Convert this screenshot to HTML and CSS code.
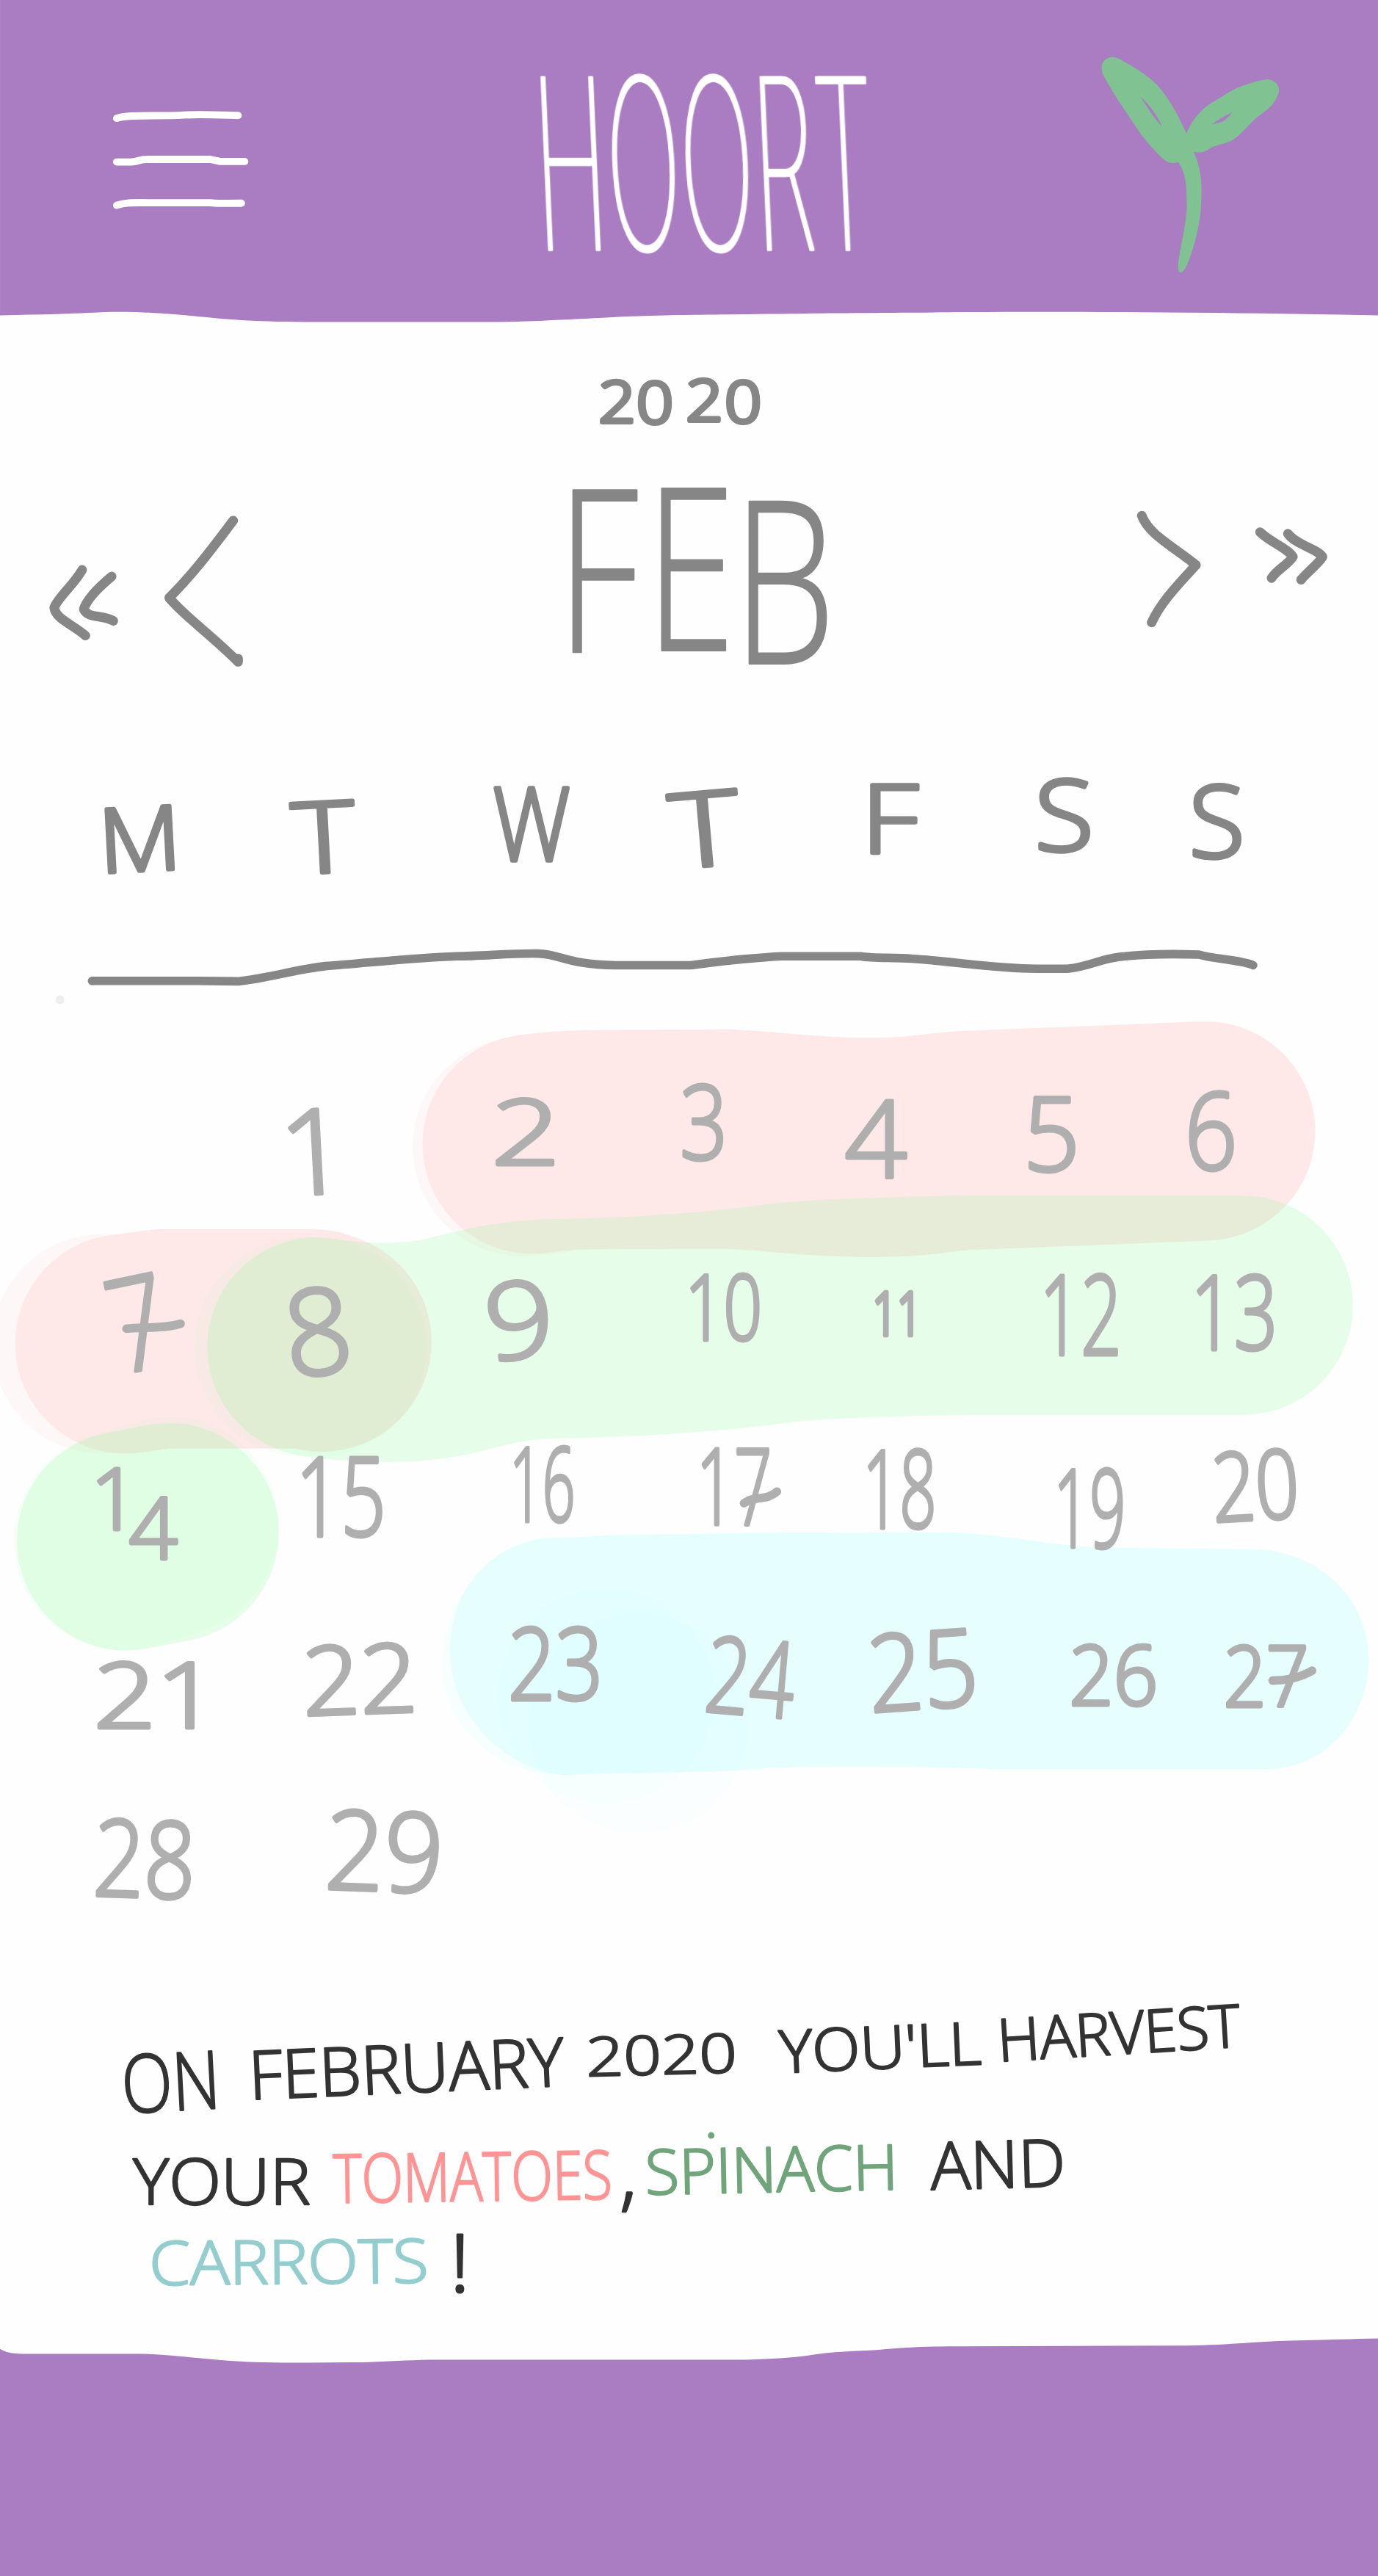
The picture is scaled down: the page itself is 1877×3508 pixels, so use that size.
FILE: index.html
```html
<!DOCTYPE html>
<html lang="en">
<head>
<meta charset="utf-8">
<title>Hoort</title>
<link rel="stylesheet" href="styles.css">
</head>
<body>
<div class="page">
  <header>
    <svg class="art" viewBox="0 0 839 200">
      <path class="purple" d="M0 0H839V192C760 190.500 680 189.500 588 190C540 190.500 510 190.500 481 191C440 191.500 410 191.500 385 192.500C350 194 325 196 300 196H214C180 196 155 196 130 193.500C105 191 85 189.500 64 190C45 191 25 191.500 0 192Z"/>
      <g class="menu">
        <path d="M71 72C78 69.500 95 71 112 70C122 69.500 134 70 145 70.300"/>
        <path d="M71 98.600H80C86 98 84 97 90 97H128L134 98.300H149"/>
        <path d="M71 125C77 123 82 123.400 90 123.400H128C135 124 142 123.800 147 123.700"/>
      </g>
      <g transform="translate(-4.400 0) skewX(2.500)">
        <text class="logo" x="325" y="152" font-size="144" textLength="207" lengthAdjust="spacingAndGlyphs">HOORT</text>
      </g>
      <g class="sprout" transform="translate(652.600 22.350) scale(.149)">
        <path fill-rule="evenodd" d="M122 130C120 100 142 83 166 83C190 84 215 103 240 117C290 148 333 175 365 217C410 275 442 335 468 396C490 345 520 305 565 274C610 248 655 215 690 203C730 190 765 176 803 174C832 178 850 200 846 225C842 245 825 275 805 292C775 317 755 328 733 352C705 380 680 413 645 428C615 440 590 442 568 454C545 470 525 478 498 470C520 520 531 570 530 630C529 680 527 730 518 770C508 825 492 880 475 922C464 952 452 965 440 963C430 955 435 915 441 885C452 825 470 740 470 690C469 640 468 600 461 572C456 550 448 530 435 512C410 521 390 515 372 498C340 468 305 428 280 395L190 260C165 220 140 180 125 150ZM280 245C310 290 330 325 370 368C345 315 320 280 280 245ZM570 360C600 335 630 322 656 308C640 330 625 343 610 349C595 354 582 354 570 360Z"/>
      </g>
    </svg>
  </header>

  <main>
    <svg class="art" viewBox="0 200 839 75">
      <text class="grey year" transform="scale(1.120 1)" x="325.500 346 373 394" y="257 257.500 256.500 257" font-size="35">2020</text>
    </svg>

    <nav class="month">
      <svg class="art arrows" viewBox="0 275 280 150">
        <path d="M50 347C45 356 35 364 33 370C34 377 44 380 52 387M68 351C62 356 53 364 51 371C54 377 62 374 69 378"/>
        <path d="M142 317C130 333 118 349 103 364C112 375 128 386 145 403V401"/>
      </svg>
      <svg class="art" viewBox="280 275 279 150">
        <text class="grey feb" transform="scale(.720 1)" x="471 546 620" y="397 396 404" font-size="138">FEB</text>
      </svg>
      <svg class="art arrows" viewBox="559 275 280 150">
        <path d="M695 314C699 325 713 332 728 344C718 355 707 366 701 379"/>
        <path d="M767 324C773 330 784 334 787 339C785 343 777 347 774 352M784 325C789 332 802 334 805 339C803 343 795 349 792 353"/>
      </svg>
    </nav>

    <div class="columns grey">
      <svg class="art" viewBox="0 425 143 135"><text x="60" y="530" font-size="54" textLength="50" lengthAdjust="spacingAndGlyphs" transform="rotate(-3 85 510)">M</text></svg>
      <svg class="art" viewBox="143 425 121 135"><text x="178" y="531" font-size="60" textLength="38" lengthAdjust="spacingAndGlyphs" transform="rotate(-3 197 510)">T</text></svg>
      <svg class="art" viewBox="264 425 111 135"><text x="300" y="524" font-size="62" textLength="47" lengthAdjust="spacingAndGlyphs">W</text></svg>
      <svg class="art" viewBox="375 425 112 135"><text x="408" y="527" font-size="63" textLength="42" lengthAdjust="spacingAndGlyphs" transform="rotate(-5 430 505)">T</text></svg>
      <svg class="art" viewBox="487 425 112 135"><text x="524" y="519" font-size="58" textLength="35" lengthAdjust="spacingAndGlyphs">F</text></svg>
      <svg class="art" viewBox="599 425 98 135"><text x="630" y="518" font-size="60" textLength="36" lengthAdjust="spacingAndGlyphs">S</text></svg>
      <svg class="art" viewBox="697 425 142 135"><text x="724" y="522" font-size="61" textLength="34" lengthAdjust="spacingAndGlyphs">S</text></svg>
    </div>

    <svg class="art rule" viewBox="0 560 839 60">
      <path d="M56 597H120L145 597.300C165 595 180 590 198 588C225 586 250 583 278 582C295 582 310 580 328 580.400C342 581 345 587 375 587.500H420C440 585 455 583 476 582H524C532 583.500 545 582.500 555 583.500C580 585 605 589.500 631 589.600H650C665 588 670 583 685 582C700 580.500 715 580.500 730 581C740 584 755 584 763 587.500"/>
      <circle cx="36.500" cy="608.500" r="2.700"/>
    </svg>

    <section class="weeks">
      <svg class="bands" viewBox="0 620 839 570">
        <g class="pink">
          <path class="faint" d="M318 698L330 697"/>
          <path d="M324 696.500C345 693 370 693.600 445 693.500C475 695 495 698.500 530 698.500C565 698.500 570 694.500 595 694L734 688.500"/>
          <path class="faint" d="M62 818H80"/>
          <path d="M76 818L99 815H191L196 817"/>
        </g>
        <g class="green">
          <path class="faint" d="M185 820H193"/>
          <path d="M193 820C225 825 255 824 275 819S310 810 332 809C400 808 440 804 470 800S560 795 590 794.600H757"/>
          <path class="faint" d="M75 938L103 929"/>
          <path d="M77 938L103 933"/>
        </g>
        <g class="cyan">
          <path class="faint" d="M269 1012C270 970 300 940 337 940V1080.500C300 1078 269 1050 269 1012Z"/>
          <path d="M274 1005C274 965 302 937 337 936C360 936 370 934 385 934C430 934 470 932.500 508 933C545 933 565 932.500 583 933C620 935 640 941 669 942L765 943C803 945 833 972 833.500 1011C832 1050 805 1077 770 1077H610C560 1075 510 1075 470 1076C430 1080 390 1078 343 1080.500C305 1076 274 1043 274 1005Z"/>
          <circle class="haze" cx="369" cy="1032" r="66"/>
          <circle class="haze" cx="389" cy="1049" r="67"/>
        </g>
      </svg>

      <div class="columns days">
        <svg class="art" viewBox="0 620 143 120"></svg>
        <svg class="art" viewBox="143 620 121 120"><text x="170" y="727" font-size="72" textLength="42" lengthAdjust="spacingAndGlyphs" transform="rotate(-3 188 700)">1</text></svg>
        <svg class="art" viewBox="264 620 111 120"><text x="299" y="709" font-size="55" textLength="42" lengthAdjust="spacingAndGlyphs">2</text></svg>
        <svg class="art" viewBox="375 620 112 120"><text x="414" y="706" font-size="63" textLength="29" lengthAdjust="spacingAndGlyphs">3</text></svg>
        <svg class="art" viewBox="487 620 112 120"><text x="514" y="717" font-size="65" textLength="38" lengthAdjust="spacingAndGlyphs">4</text></svg>
        <svg class="art" viewBox="599 620 98 120"><text x="623" y="713" font-size="63" textLength="34.500" lengthAdjust="spacingAndGlyphs">5</text></svg>
        <svg class="art" viewBox="697 620 142 120"><text x="721.500" y="712" font-size="65" textLength="32" lengthAdjust="spacingAndGlyphs">6</text></svg>

        <svg class="art" viewBox="0 740 143 120"><text x="66" y="834" font-size="79" textLength="36" lengthAdjust="spacingAndGlyphs" transform="rotate(-12 84 806)">7</text><path d="M77 809C88 808 100 809 110 806"/></svg>
        <svg class="art" viewBox="143 740 121 120"><text x="173" y="837" font-size="73" textLength="41" lengthAdjust="spacingAndGlyphs" transform="rotate(-6 193 811)">8</text></svg>
        <svg class="art" viewBox="264 740 111 120"><text x="295" y="827" font-size="65" textLength="42" lengthAdjust="spacingAndGlyphs" transform="rotate(-6 315 804)">9</text></svg>
        <svg class="art" viewBox="375 740 112 120"><text x="417" y="816" font-size="55" textLength="47" lengthAdjust="spacingAndGlyphs">10</text></svg>
        <svg class="art" viewBox="487 740 112 120"><text class="small" x="531" y="813" font-size="36" textLength="30" lengthAdjust="spacingAndGlyphs">11</text></svg>
        <svg class="art" viewBox="599 740 98 120"><text x="633" y="825" font-size="68" textLength="50" lengthAdjust="spacingAndGlyphs">12</text></svg>
        <svg class="art" viewBox="697 740 142 120"><text x="725" y="822" font-size="63" textLength="53" lengthAdjust="spacingAndGlyphs">13</text></svg>

        <svg class="art" viewBox="0 860 143 110"><text x="55 78.500" y="931 949" font-size="52">14</text></svg>
        <svg class="art" viewBox="143 860 121 110"><text x="180" y="935" font-size="67" textLength="55" lengthAdjust="spacingAndGlyphs">15</text></svg>
        <svg class="art" viewBox="264 860 111 110"><text x="310" y="926" font-size="63" textLength="40" lengthAdjust="spacingAndGlyphs">16</text></svg>
        <svg class="art" viewBox="375 860 112 110"><text x="424" y="928" font-size="64" textLength="46" lengthAdjust="spacingAndGlyphs">17</text><path d="M453 915C460 910 466 914 473 908"/></svg>
        <svg class="art" viewBox="487 860 112 110"><text x="525" y="930" font-size="66" textLength="45" lengthAdjust="spacingAndGlyphs">18</text></svg>
        <svg class="art" viewBox="599 860 98 110"><text x="641.500" y="942" font-size="66" textLength="44" lengthAdjust="spacingAndGlyphs">19</text></svg>
        <svg class="art" viewBox="697 860 142 110"><text x="738" y="925" font-size="58" textLength="53" lengthAdjust="spacingAndGlyphs" transform="rotate(-3 764 905)">20</text></svg>

        <svg class="art" viewBox="0 970 143 110"><text x="57" y="1052" font-size="55" textLength="76" lengthAdjust="spacingAndGlyphs">21</text></svg>
        <svg class="art" viewBox="143 970 121 110"><text x="184" y="1043" font-size="58" textLength="70" lengthAdjust="spacingAndGlyphs" transform="rotate(-2 218 1020)">22</text></svg>
        <svg class="art" viewBox="264 970 111 110"><text x="309" y="1035" font-size="61" textLength="58" lengthAdjust="spacingAndGlyphs">23</text></svg>
        <svg class="art" viewBox="375 970 112 110"><text x="430" y="1044" font-size="64" textLength="54" lengthAdjust="spacingAndGlyphs" transform="rotate(5 457 1020)">24</text></svg>
        <svg class="art" viewBox="487 970 112 110"><text x="528" y="1040" font-size="65" textLength="67" lengthAdjust="spacingAndGlyphs" transform="rotate(-4 562 1016)">25</text></svg>
        <svg class="art" viewBox="599 970 98 110"><text x="651" y="1038" font-size="50" textLength="54" lengthAdjust="spacingAndGlyphs">26</text></svg>
        <svg class="art" viewBox="697 970 142 110"><text x="745" y="1039" font-size="51" textLength="52" lengthAdjust="spacingAndGlyphs">27</text><path d="M775 1023C785 1023 792 1021 799 1017"/></svg>

        <svg class="art" viewBox="0 1080 143 110"><text x="57" y="1155" font-size="65" textLength="62" lengthAdjust="spacingAndGlyphs" transform="rotate(2 88 1132)">28</text></svg>
        <svg class="art" viewBox="143 1080 121 110"><text x="198" y="1151" font-size="67" textLength="72" lengthAdjust="spacingAndGlyphs" transform="rotate(2 234 1128)">29</text></svg>
      </div>
    </section>

    <svg class="art note" viewBox="0 1190 839 220">
      <text x="74" y="1285" font-size="49" textLength="60" lengthAdjust="spacingAndGlyphs" transform="rotate(-3 104 1268)">ON</text>
      <text x="152" y="1278" font-size="41" textLength="192" lengthAdjust="spacingAndGlyphs" transform="rotate(-2.500 155 1276)">FEBRUARY</text>
      <text x="357" y="1264" font-size="33" textLength="92" lengthAdjust="spacingAndGlyphs" transform="rotate(-1.500 357 1264)">2020</text>
      <text x="475" y="1262" font-size="36" textLength="123" lengthAdjust="spacingAndGlyphs" transform="rotate(-2.500 475 1262)">YOU'LL</text>
      <text x="608" y="1255" font-size="36" textLength="148" lengthAdjust="spacingAndGlyphs" transform="rotate(-3.500 608 1255)">HARVEST</text>
      <text x="81" y="1342" font-size="39" textLength="108" lengthAdjust="spacingAndGlyphs">YOUR</text>
      <text class="tomato" x="203" y="1341" font-size="41" textLength="170" lengthAdjust="spacingAndGlyphs" transform="rotate(-.8 203 1341)">TOMATOES</text>
      <text x="377" y="1340" font-size="48" textLength="11" lengthAdjust="spacingAndGlyphs">,</text>
      <g class="spinach">
        <text x="393" y="1336" font-size="38" textLength="154" lengthAdjust="spacingAndGlyphs" transform="rotate(-1.200 393 1336)">SPINACH</text>
        <circle cx="433" cy="1300" r="2"/>
      </g>
      <text x="567" y="1333" font-size="40" textLength="82" lengthAdjust="spacingAndGlyphs" transform="rotate(-1.500 567 1333)">AND</text>
      <text class="carrot" x="91" y="1391" font-size="37" textLength="170" lengthAdjust="spacingAndGlyphs" transform="rotate(-.5 91 1392)">CARROTS</text>
      <text class="bang" x="274" y="1395" font-size="49" textLength="12" lengthAdjust="spacingAndGlyphs">!</text>
    </svg>
  </main>

  <footer>
    <svg class="art" viewBox="0 1410 839 158">
      <path class="purple" d="M0 1430C5 1433 10 1433 15 1433H88C110 1434 130 1437 155 1438C175 1438.500 195 1438.500 214 1438.200C235 1438 248 1436.600 267 1436.600H455C470 1436 480 1435.500 492 1434C508 1431.500 520 1431.500 535 1430.600C555 1428.500 570 1428.400 588 1428.400L717 1428C745 1428 765 1425.500 786 1425C805 1424.500 820 1424 839 1423.600V1570H0Z"/>
    </svg>
  </footer>
</div>
</body>
</html>
```
FILE: styles.css
```css
body {
  margin: 0;
  background: #fefefe;
  font-family: "Open Sans", "Noto Sans", sans-serif;
}

.page {
  width: 1877px;
  height: 3508px;
  overflow: hidden;
  display: flex;
  flex-direction: column;
}

.art {
  display: block;
  width: 100%;
  height: auto;
  overflow: visible;
}

.art text {
  font-weight: 300;
  stroke-linejoin: round;
  stroke-linecap: round;
}

.purple { fill: #aa7cc2; }

.menu {
  fill: none;
  stroke: #fff;
  stroke-width: 4.4;
  stroke-linecap: round;
  stroke-linejoin: round;
}

/* The shadow thickens the narrow upright strokes only */
.art .logo {
  font-family: Inter, Roboto, sans-serif;
  font-weight: 100;
  fill: #fff;
  stroke: #fff;
  stroke-width: 1.8;
  filter: drop-shadow(1.5px 0 0 #fff);
}

.sprout { fill: #80c292; }

.grey,
.grey text {
  fill: #868686;
  stroke: #868686;
  stroke-width: 2.4;
}

.art .year {
  font-weight: 300;
  stroke-width: 2.6;
}

.art .feb { stroke-width: 1.2; }

.month {
  display: grid;
  grid-template-columns: 280fr 279fr 280fr;
}

.arrows path,
.rule path {
  fill: none;
  stroke: #868686;
  stroke-width: 5.8;
  stroke-linecap: round;
  stroke-linejoin: round;
}

.rule path { stroke-width: 5.2; }
.rule circle { fill: #eee; }

.columns {
  display: grid;
  grid-template-columns: 143fr 121fr 111fr 112fr 112fr 98fr 142fr;
}

.weeks { position: relative; }

.days { position: relative; }

.days text {
  fill: #afafaf;
  stroke: #afafaf;
  stroke-width: 2.2;
}

.days .small { stroke-width: 3; }

.days path {
  fill: none;
  stroke: #afafaf;
  stroke-width: 5.2;
  stroke-linecap: round;
}

/* Harvest periods sit behind the dates */
.bands {
  position: absolute;
  inset: 0;
  width: 100%;
  height: 100%;
  overflow: visible;
}

.bands path {
  fill: none;
  stroke-width: 133.500;
  stroke-linecap: round;
  stroke-linejoin: round;
}

.pink path { stroke: #fee8e8; }
.green path { stroke: rgba(135, 255, 150, .2); }
.bands .faint { opacity: .3; }
.cyan path { fill: #e7feff; stroke: none; }
.haze { fill: #a0f8ff; opacity: .04; }

.note text {
  fill: #333;
  stroke: #333;
  stroke-width: 1.1;
}

.note .tomato { fill: #ff9494; stroke: #ff9494; }
.note .spinach text { fill: #70a57b; stroke: #70a57b; }
.note .spinach circle { fill: #70a57b; }
.note .carrot { fill: #94cdce; stroke: #94cdce; }
.note .bang { stroke-width: 1.4; }
```
